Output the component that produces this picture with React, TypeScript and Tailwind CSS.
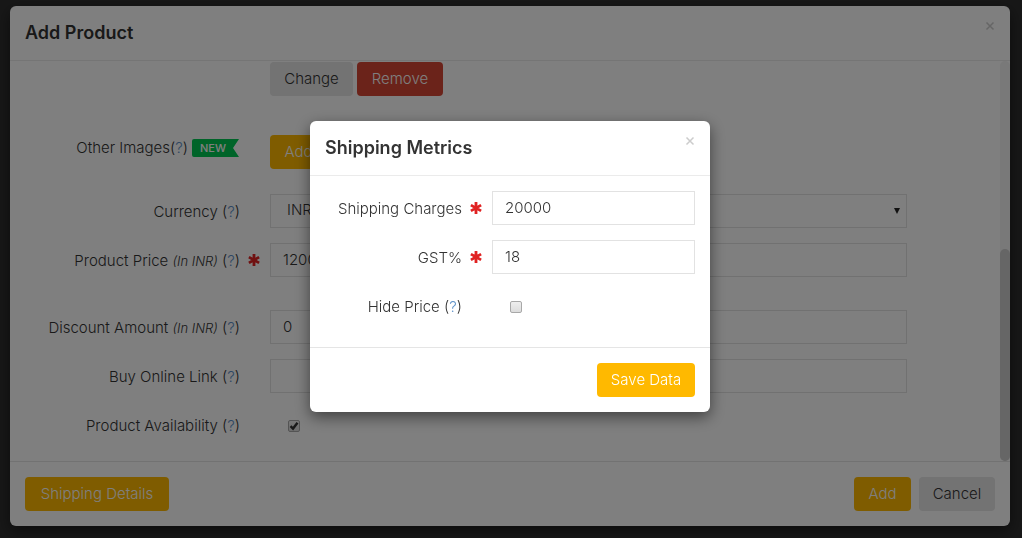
import React, { useState } from 'react';

const BTN = 'h-[34px] rounded-[4px] text-center whitespace-nowrap';
const YELLOW = 'bg-[#ffb900] text-white';
const GREY = 'bg-[#e6e6e6] text-[#333]';
const INPUT = 'h-[34px] w-full border border-[#e2e2e2] bg-white px-[12px] pb-[2px] text-[#333] outline-none';

const Help = () => (
  <>
    (<a href="#" className="text-[#5b8fc7]">?</a>)
  </>
);

const Required = () => (
  <svg viewBox="0 0 12 12" className="size-[12px]" stroke="#e02222" strokeWidth="2.8" aria-label="required">
    <path d="M6 0V12M0.9 3.1 11.1 8.9M11.1 3.1 0.9 8.9" />
  </svg>
);

const Close = ({ label }: { label: string }) => (
  <button type="button" aria-label={label} className="flex size-[10px] items-center justify-center text-[#ccc]">
    <svg viewBox="0 0 10 10" className="size-[10px]" stroke="currentColor" strokeWidth="1.5">
      <path d="M1.5 1.5 8.5 8.5M8.5 1.5 1.5 8.5" />
    </svg>
  </button>
);

const ModalHeader = ({ title, closeLabel }: { title: string; closeLabel: string }) => (
  <header className="flex items-start justify-between border-b border-[#ebebeb] p-[15px]">
    <h2 className="text-[18px] leading-[24px] font-semibold text-[#333]">{title}</h2>
    <Close label={closeLabel} />
  </header>
);

const Checkbox = ({ id, initial = false }: { id: string; initial?: boolean }) => {
  const [checked, setChecked] = useState(initial);
  return (
    <span className="relative mt-[2px] ml-[18px] block size-[12px]">
      <input
        id={id}
        type="checkbox"
        checked={checked}
        onChange={(e) => setChecked(e.target.checked)}
        className="block size-[12px] appearance-none rounded-[2px] border border-[#a8a8a8] bg-linear-to-b from-[#eee] to-[#dcdcdc]"
      />
      {checked && (
        <svg viewBox="0 0 12 12" className="pointer-events-none absolute inset-0 size-[12px]" fill="none" stroke="#333" strokeWidth="2.4">
          <path d="M2.5 6.2 5 8.6 9.5 2.8" />
        </svg>
      )}
    </span>
  );
};

type RowProps = {
  id?: string;
  label?: React.ReactNode;
  required?: boolean;
  narrow?: boolean;
  children: React.ReactNode;
};

const Row = ({ id, label, required, narrow, children }: RowProps) => (
  <div className="flex min-h-[34px] items-center">
    <label htmlFor={id} className={`${narrow ? 'w-[152px]' : 'w-[230px]'} shrink-0 pt-[2px] text-right whitespace-nowrap`}>
      {label}
    </label>
    <span className="flex w-[30px] shrink-0 justify-center pr-[3px]">{required && <Required />}</span>
    <div className="min-w-0 flex-1">{children}</div>
  </div>
);

const NewBadge = () => (
  <span className="relative ml-1 inline-flex h-[18px] w-[48px] items-center pl-2 text-[11px] font-medium text-white">
    <svg viewBox="0 0 48 18" className="absolute inset-0 h-[18px] w-[48px]" fill="#00c853">
      <path d="M2 0H47L41 9L47 18H2Q0 18 0 16V2Q0 0 2 0Z" />
    </svg>
    <span className="relative">NEW</span>
  </span>
);

const InInr = () => <i className="text-[13px]">(In INR)</i>;

const ProductModal = () => (
  <section className="w-full rounded-[6px] bg-white shadow-[0_5px_15px_rgba(0,0,0,0.5)]">
    <ModalHeader title="Add Product" closeLabel="Close product" />
    <div className="flex">
      <div className="min-w-0 flex-1 pt-px pr-[93px] pb-[19px]">
        <Row>
          <div className="flex gap-1">
            <button type="button" className={`${BTN} ${GREY} w-[83px]`}>Change</button>
            <button type="button" className={`${BTN} w-[86px] bg-[#d64635] text-white`}>Remove</button>
          </div>
        </Row>
        <div className="mt-[39px] flex">
          <div className="flex h-[26px] w-[230px] shrink-0 items-center justify-end">
            <span>Other Images<Help /></span>
            <NewBadge />
          </div>
          <button type="button" className={`${BTN} ${YELLOW} ml-[30px] w-[57px]`}>Add</button>
        </div>
        <div className="mt-[25px] flex flex-col gap-[15px]">
          <Row id="currency" label={<>Currency <Help /></>}>
            <div className="relative">
              <select id="currency" className={`${INPUT} appearance-none pl-[16px]`}>
                <option>INR</option>
                <option>USD</option>
              </select>
              <svg viewBox="0 0 6 6" className="pointer-events-none absolute top-[14px] right-[7px] size-[6px]" fill="#222">
                <path d="M0 0H6L3 6Z" />
              </svg>
            </div>
          </Row>
          <Row id="price" required label={<>Product Price <InInr /> <Help /></>}>
            <input id="price" defaultValue="12000" className={INPUT} />
          </Row>
        </div>
        <div className="mt-[33px] flex flex-col gap-[15px]">
          <Row id="discount" label={<>Discount Amount <InInr /> <Help /></>}>
            <input id="discount" defaultValue="0" className={INPUT} />
          </Row>
          <Row id="link" label={<>Buy Online Link <Help /></>}>
            <input id="link" className={INPUT} />
          </Row>
          <Row id="available" label={<>Product Availability <Help /></>}>
            <Checkbox id="available" initial />
          </Row>
        </div>
      </div>
      <div className="flex w-[10px] flex-col justify-end rounded-[5px] bg-[#f2f2f2]">
        <div className="h-[53%] rounded-[5px] bg-[#ccc]" />
      </div>
    </div>
    <footer className="flex items-center justify-between border-t border-[#e5e5e5] p-[15px]">
      <button type="button" className={`${BTN} ${YELLOW} w-[144px]`}>Shipping Details</button>
      <div className="flex gap-2">
        <button type="button" className={`${BTN} ${YELLOW} w-[57px]`}>Add</button>
        <button type="button" className={`${BTN} ${GREY} w-[76px]`}>Cancel</button>
      </div>
    </footer>
  </section>
);

const ShippingModal = () => (
  <section role="dialog" aria-label="Shipping Metrics" className="w-[400px] rounded-[6px] bg-white shadow-[0_5px_15px_rgba(0,0,0,0.5)]">
    <ModalHeader title="Shipping Metrics" closeLabel="Close shipping" />
    <div className="flex flex-col gap-[15px] pt-[15px] pr-[15px] pb-6">
      <Row id="charges" narrow required label="Shipping Charges">
        <input id="charges" defaultValue="20000" className={INPUT} />
      </Row>
      <Row id="gst" narrow required label="GST%">
        <input id="gst" defaultValue="18" className={INPUT} />
      </Row>
      <Row id="hide" narrow label={<>Hide Price <Help /></>}>
        <Checkbox id="hide" />
      </Row>
    </div>
    <footer className="flex justify-end border-t border-[#e5e5e5] p-[15px]">
      <button type="button" className={`${BTN} ${YELLOW} w-[98px]`}>Save Data</button>
    </footer>
  </section>
);

function App() {
  return (
    <div className="min-h-screen bg-[#303030] pt-[6px] pr-[12px] pb-[12px] pl-[10px] font-['Inter',sans-serif] text-[15px] leading-[20px] font-light text-[#333]">
      <ProductModal />
      <div className="fixed inset-0 z-10 flex items-start justify-center bg-black/50 pt-[121px] pr-[12px] pl-[10px]">
        <ShippingModal />
      </div>
    </div>
  );
}

export default App;
